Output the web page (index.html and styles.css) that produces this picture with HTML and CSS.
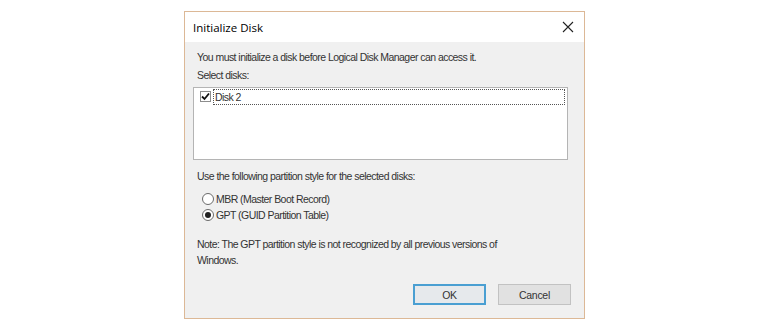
FILE: index.html
```html
<!DOCTYPE html>
<html>
<head>
<meta charset="utf-8">
<link rel="stylesheet" href="styles.css">
</head>
<body>
<div class="stage">
  <div class="dialog">
    <div class="titlebar">
      <span class="title">Initialize Disk</span>
      <svg class="close" width="12" height="12" viewBox="0 0 12 12"><path d="M1 1L11 11M11 1L1 11" stroke="#222" stroke-width="1.1" fill="none"/></svg>
    </div>
    <div class="body">
      <p class="line intro">You must initialize a disk before Logical Disk Manager can access it.</p>
      <p class="line select">Select disks:</p>
      <div class="listbox">
        <div class="row">
          <span class="check"><svg width="9" height="9" viewBox="0 0 9 9"><path d="M1 4.5L3.5 7L8 1.5" stroke="#111" stroke-width="1.8" fill="none"/></svg></span>
          <span class="rowlabel">Disk 2</span>
        </div>
      </div>
      <p class="line style">Use the following partition style for the selected disks:</p>
      <div class="radios">
        <div class="radio"><span class="dot"></span><span>MBR (Master Boot Record)</span></div>
        <div class="radio"><span class="dot on"></span><span>GPT (GUID Partition Table)</span></div>
      </div>
      <p class="line note">Note: The GPT partition style is not recognized by all previous versions of<br>Windows.</p>
      <div class="buttons">
        <button class="btn ok">OK</button>
        <button class="btn">Cancel</button>
      </div>
    </div>
  </div>
</div>
</body>
</html>
```
FILE: styles.css
```css
html, body { margin: 0; padding: 0; background: #fff; }
body { width: 770px; height: 330px; overflow: hidden; font-family: "Liberation Sans", Arial, sans-serif; }
.stage { padding: 11px 0 0 184px; }
.dialog {
  width: 399px; height: 306px;
  border: 1px solid #dcb896;
  background: #f0f0f0;
  display: flex; flex-direction: column;
}
.titlebar {
  height: 30px; background: #fff;
  display: flex; align-items: center; justify-content: space-between;
  padding: 0 10px 0 8px;
}
.title { font-family: "Open Sans", sans-serif; font-size: 11.5px; color: #000; }
.body { padding: 9px 16px 0 8px; color: #333; font-size: 10.5px; letter-spacing: -0.55px; }
.line { margin: 0; line-height: 13px; padding-left: 4px; }
.select { margin-top: 5px; }
.listbox { margin-top: 5px; height: 71px; border: 1px solid #b4b4b4; background: #fff; padding: 0 2px 0 6px; }
.row { display: flex; align-items: center; height: 17px; }
.check { width: 9px; height: 9px; border: 1px solid #8d8d8d; background: #fff; display: flex; align-items: center; justify-content: center; }
.rowlabel { flex: 1; margin-left: 2px; height: 14px; line-height: 14px; border: 1px dotted #555; padding-left: 1px; }
.style { margin-top: 10px; }
.radios { margin-top: 8px; padding-left: 9px; }
.radio { display: flex; align-items: center; height: 16px; }
.dot { width: 12px; height: 12px; border: 1px solid #6a6a6a; border-radius: 50%; background: #fff; margin-right: 2px; position: relative; box-sizing: border-box; }
.dot.on::after { content: ""; position: absolute; left: 2px; top: 2px; width: 6px; height: 6px; border-radius: 50%; background: #222; }
.note { margin-top: 13px; line-height: 16px; }
.buttons { display: flex; justify-content: flex-end; gap: 12px; margin-top: 16px; margin-right: -3px; }
.btn { width: 73px; height: 21px; font-family: inherit; font-size: 10.5px; letter-spacing: -0.3px; color: #333; background: #e1e1e1; border: 1px solid #c2c2c2; padding: 0; }
.btn.ok { border: 2px solid #4a9fd2; background: #e6e9ec; }
```
